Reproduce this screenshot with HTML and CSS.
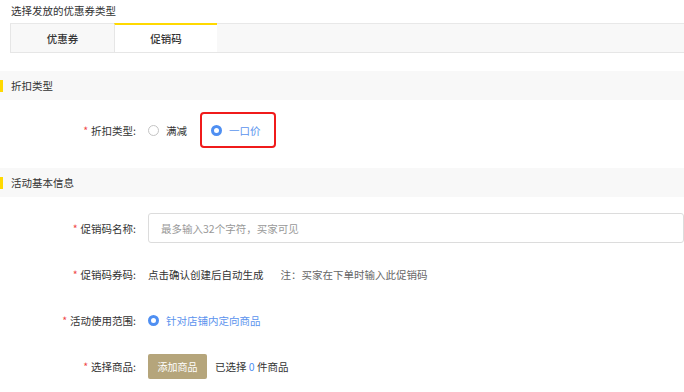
FILE: index.html
```html
<!DOCTYPE html>
<html lang="zh">
<head>
<meta charset="utf-8">
<link rel="stylesheet" href="styles.css">
</head>
<body>
<div class="page">
  <div class="page-title">选择发放的优惠券类型</div>
  <div class="tabs">
    <div class="tab">优惠券</div>
    <div class="tab active">促销码</div>
  </div>

  <div class="section-head first"><span class="bar"></span>折扣类型</div>
  <div class="row row-type">
    <div class="label"><span class="req">*</span>折扣类型:</div>
    <div class="field">
      <label class="radio"><span class="dot"></span>满减</label>
      <div class="highlight">
        <label class="radio checked"><span class="dot"></span>一口价</label>
      </div>
    </div>
  </div>

  <div class="section-head"><span class="bar"></span>活动基本信息</div>
  <div class="row row-name">
    <div class="label"><span class="req">*</span>促销码名称:</div>
    <div class="field">
      <div class="input">最多输入32个字符，买家可见</div>
    </div>
  </div>
  <div class="row">
    <div class="label"><span class="req">*</span>促销码券码:</div>
    <div class="field">
      <span class="text">点击确认创建后自动生成</span>
      <span class="note">注：买家在下单时输入此促销码</span>
    </div>
  </div>
  <div class="row">
    <div class="label"><span class="req">*</span>活动使用范围:</div>
    <div class="field">
      <label class="radio checked"><span class="dot"></span>针对店铺内定向商品</label>
    </div>
  </div>
  <div class="row">
    <div class="label"><span class="req">*</span>选择商品:</div>
    <div class="field">
      <span class="btn">添加商品</span>
      <span class="text">已选择 <span class="num">0</span> 件商品</span>
    </div>
  </div>
</div>
</body>
</html>
```

FILE: styles.css
```css
* { box-sizing: border-box; }
html, body { margin: 0; padding: 0; background: #fff; }
body {
  font-family: "Noto Sans CJK SC", "Noto Sans", sans-serif;
  font-size: 10.5px;
  color: #333;
  width: 684px;
  height: 392px;
  overflow: hidden;
}
.page-title {
  height: 23px;
  line-height: 22px;
  padding-left: 11px;
  color: #333;
}
.tabs {
  display: flex;
  margin-left: 10px;
  height: 30px;
  background: #f8f8f8;
  border-top: 1px solid #e8e8e8;
  border-bottom: 1px solid #e6e6e6;
}
.tab {
  width: 104px;
  display: flex;
  align-items: center;
  justify-content: center;
  border-left: 1px solid #e6e6e6;
  color: #333;
  font-weight: 500;
}
.tab.active {
  width: 103px;
  background: #fff;
  border-top: 2px solid #ffd900;
  margin-top: -1px;
}
.section-head {
  display: flex;
  align-items: center;
  height: 29px;
  background: #f8f8f8;
  margin-top: 8px;
  color: #333;
}
.section-head.first { margin-top: 18px; }
.section-head .bar {
  width: 3px;
  height: 12px;
  background: #ffd900;
  margin-right: 8px;
}
.row {
  display: flex;
  align-items: center;
  height: 46px;
}
.row-type { height: 60px; }
.label {
  width: 136px;
  text-align: right;
  color: #333;
}
.req { color: #f04848; margin-right: 3px; }
.field {
  display: flex;
  align-items: center;
  flex: 1;
  margin-left: 12px;
}
.radio {
  display: inline-flex;
  align-items: center;
  color: #333;
}
.radio .dot {
  width: 11px;
  height: 11px;
  border-radius: 50%;
  border: 1px solid #c4c4c4;
  background: #fff;
  margin-right: 7px;
}
.radio.checked { color: #5b93ee; }
.radio.checked .dot {
  border: 3px solid #4f8ff2;
  background: #fff;
}
.highlight {
  margin-left: 13px;
  width: 76px;
  height: 36px;
  border: 2px solid #f01b1b;
  border-radius: 4px;
  display: flex;
  align-items: center;
  padding-left: 9px;
}
.row-name { margin-top: 8px; }
.input {
  flex: 1;
  height: 30px;
  border: 1px solid #dcdcdc;
  border-radius: 3px;
  display: flex;
  align-items: center;
  padding-left: 12px;
  color: #999;
}
.note { color: #666; margin-left: 17px; }
.btn {
  display: inline-flex;
  align-items: center;
  justify-content: center;
  width: 59px;
  height: 25px;
  background: #b5a57b;
  color: #fff;
  border-radius: 2px;
  font-size: 10px;
  margin-right: 8px;
}
.num { color: #4f8ff2; }
```
